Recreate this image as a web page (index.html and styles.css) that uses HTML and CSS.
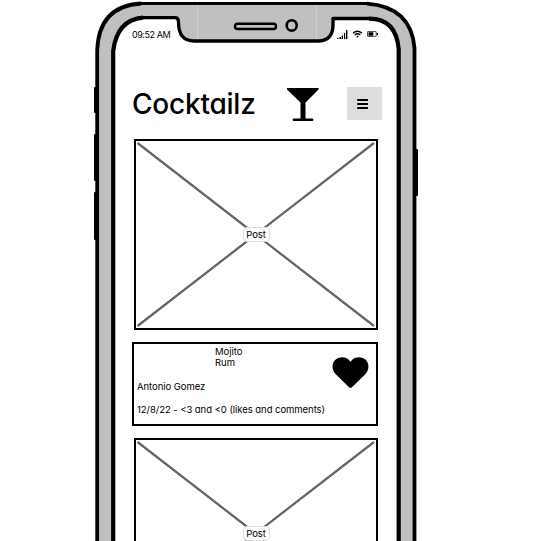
FILE: index.html
```
<!DOCTYPE html>
<html lang="en">
<head>
<meta charset="utf-8">
<title>Cocktailz</title>
<link rel="stylesheet" href="styles.css">
</head>
<body>
<svg class="phone-frame" viewBox="0 0 538 541" aria-hidden="true">
  <path fill="#c2bfc0" fill-rule="evenodd" d="M97 560V50Q99 6 141 3.500H368Q411 7 414.500 48V560ZM113.200 560V51Q117 20 143 17.500H175Q178.500 17.500 178.500 21Q178.500 41 194 41H319Q333 40 333 25V18.500H370Q396 18.500 398.700 49V560Z"/>
  <path class="seam" d="M197.500 4V40M316.500 4V40"/>
  <g class="outline">
    <path stroke-width="3.800" d="M97.200 560V50Q99 6 141 3.500"/>
    <path stroke-width="3" d="M140 3.500H368"/>
    <path stroke-width="3.800" d="M367 3.700Q411 7 414.500 48V560"/>
    <path stroke-width="4.200" d="M113.200 560V51Q117 20 143 17.700"/>
    <path stroke-width="3.300" d="M142 17.700H175Q178.500 17.700 178.500 22Q178.500 41 194 41H319Q333 40 333 25V18.500H370"/>
    <path stroke-width="4.200" d="M369 18.600Q396 18.500 398.700 49V560"/>
    <rect stroke-width="2.400" x="235" y="23.700" width="41" height="5.300" rx="2.600"/>
    <ellipse stroke-width="2.600" cx="291.700" cy="25.400" rx="5" ry="5.200"/>
  </g>
  <g class="buttons">
    <rect x="94" y="87" width="4" height="26" rx="1"/>
    <rect x="94" y="134" width="4" height="47" rx="1"/>
    <rect x="94" y="192" width="4" height="48" rx="1"/>
    <rect x="414" y="149" width="4" height="47" rx="1"/>
  </g>
</svg>
<main class="screen">
  <div class="status">
    <span class="clock">09:52 AM</span>
    <svg class="indicators" width="42" height="12" viewBox="0 0 42 12" aria-hidden="true">
      <path d="M0 9h1.500v1H0zM2.500 8H4v2H2.500zM4.700 6.500h1.300V10H4.700zM7 4h1.200v6H7zM9 1h1.400v9H9z"/>
      <path class="wifi" d="M16 4.300q4.400-4.100 9 0M17.700 6q2.800-2.500 5.600 0"/>
      <circle cx="20.500" cy="7.600" r="1"/>
      <rect class="cell" x="30.500" y="2.500" width="8.700" height="5" rx=".5"/>
      <path d="M31.500 3.300h4.800v3.400h-4.800zM39.500 4H41v2h-1.500z"/>
    </svg>
  </div>
  <header class="header">
    <h1>Cocktailz</h1>
    <svg class="glass" width="34" height="35" viewBox="0 0 34 35" aria-hidden="true">
      <path d="M1.300 1H32q1.400 0 .5 1.500L19.500 15.500V31.500H26q1.400 0 1.400 1.200T26 34H8q-1.400 0-1.400-1.300T8 31.500h6.500V15.500L1 2.500Q.300 1 1.300 1z"/>
    </svg>
    <button class="menu" aria-label="Menu">
      <svg width="11" height="10" viewBox="0 0 11 10"><path d="M.8 1h9.700M.8 5h9.700M.8 9h9.700"/></svg>
    </button>
  </header>
  <section class="post">
    <svg class="cross" viewBox="0 0 241 187" preserveAspectRatio="none" aria-hidden="true"><path d="M1.500 2 239 185M239 2 1.500 185"/></svg>
    <span class="tag">Post</span>
  </section>
  <section class="details">
    <div class="drink"><p>Mojito</p><p>Rum</p></div>
    <svg class="heart" width="37" height="33" viewBox="0 0 37 33" aria-hidden="true"><path d="M18.500 5.700C22 .5 29 .1 33 3.300C37.700 7.200 37.300 13.500 33.500 18L19.700 31.400Q18.500 32.300 17.300 31.400L3.500 18C-.4 13.500-.7 7.200 4 3.300C8 .1 15 .5 18.500 5.700z"/></svg>
    <p class="author">Antonio Gomez</p>
    <p class="meta">12/8/22 - &lt;3 and &lt;0 (likes and comments)</p>
  </section>
  <section class="post">
    <svg class="cross" viewBox="0 0 241 187" preserveAspectRatio="none" aria-hidden="true"><path d="M1.500 2 239 185M239 2 1.500 185"/></svg>
    <span class="tag">Post</span>
  </section>
</main>
</body>
</html>
```
FILE: styles.css
```
* { box-sizing: border-box; }
body {
  margin: 0;
  height: 541px;
  position: relative;
  overflow: hidden;
  background: #fff;
  color: #000;
  font: 9.5px/11px Inter, "Liberation Sans", sans-serif;
  font-feature-settings: "cv11";
  letter-spacing: -.05px;
}
p, h1 { margin: 0; }
svg { display: block; }
.phone-frame { position: absolute; inset: 0; width: 538px; height: 541px; }
.outline { fill: none; stroke: #000; stroke-linejoin: round; }
.seam { stroke: #d2d0d1; stroke-width: 1; }
.screen { position: relative; width: 251px; height: 541px; overflow: hidden; margin-left: 132px; padding-top: 29px; }
.status { display: flex; justify-content: space-between; height: 12px; padding-right: 4px; }
.clock { font-size: 9px; line-height: 12px; letter-spacing: -.45px; }
.wifi { fill: none; stroke: #000; stroke-width: 1.200; }
.cell { fill: none; stroke: #555; stroke-width: 1; }
.header { display: flex; align-items: center; height: 35px; margin-top: 46px; }
h1 { width: 154px; font-size: 28px; line-height: 35px; font-weight: 450; letter-spacing: -.22px; white-space: nowrap; }
.menu { display: grid; place-items: center; width: 35px; height: 33px; margin: -2px 0 0 27px; padding: 0 4px 0 0; border: 0; background: #ddd; }
.menu path { stroke: #000; stroke-width: 1.800; stroke-linecap: round; }
.post { display: grid; place-items: center; width: 244px; height: 191px; margin: 17px 0 0 2px; border: 2px solid #000; }
.cross, .tag { grid-area: 1 / 1; }
.cross { width: 100%; height: 187px; fill: none; stroke: #666; stroke-width: 2.300; }
.tag { z-index: 1; width: 27px; height: 15px; border: 1px solid #ddd; border-radius: 4px; background: rgba(255,255,255,.93); line-height: 13px; text-align: center; }
.details { display: grid; grid-template-columns: 78px 116px 37px; grid-template-rows: 35px 23px 20px; width: 246px; height: 84px; margin-top: 12px; padding: 2px 0 0 3px; border: 2px solid #000; }
.drink { grid-column: 2; }
.heart { grid-column: 3; grid-row: 1; margin: 10px 0 0 1px; }
.author, .meta { grid-column: 1 / -1; white-space: nowrap; }
.details + .post { margin-top: 12px; }
```
